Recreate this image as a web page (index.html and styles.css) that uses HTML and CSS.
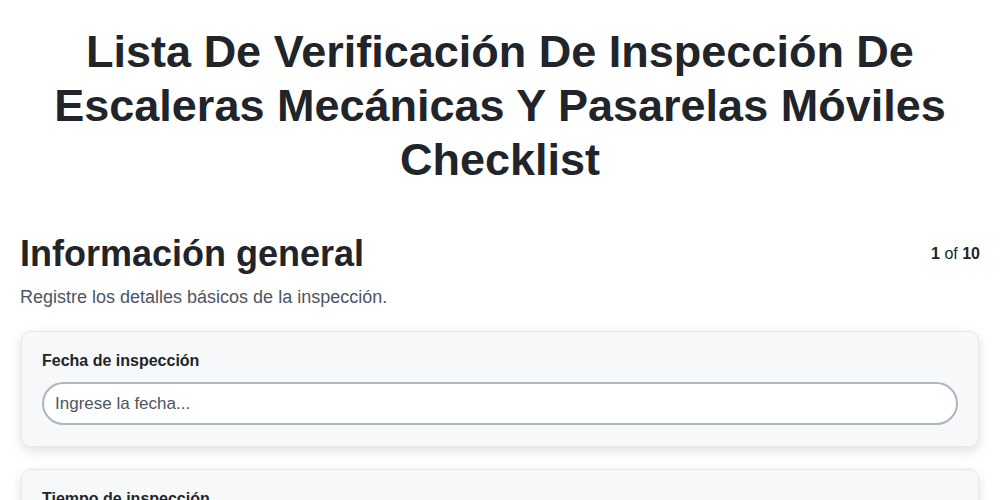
FILE: index.html
```html
<!DOCTYPE html>
<html lang="es">
<head>
    <meta charset="utf-8">
    <meta name="viewport" content="width=device-width, initial-scale=1.0">
    <title>Checklist</title>
    <link rel="stylesheet" href="styles.css">
</head>
<body>
    <div class="page">
        <h1 class="title">Lista De Verificación De Inspección De Escaleras Mecánicas Y Pasarelas Móviles Checklist</h1>

        <div class="section-head">
            <h2>Información general</h2>
            <div class="step"><b>1</b> of <b>10</b></div>
        </div>
        <p class="section-desc">Registre los detalles básicos de la inspección.</p>

        <div class="field-card">
            <label class="field-label" for="fecha">Fecha de inspección</label>
            <input class="field-input" id="fecha" type="text" placeholder="Ingrese la fecha...">
        </div>

        <div class="field-card">
            <label class="field-label" for="tiempo">Tiempo de inspección</label>
            <input class="field-input" id="tiempo" type="text" placeholder="Ingrese la hora...">
        </div>
    </div>
</body>
</html>
```

FILE: styles.css
```css
body {
    margin: 0;
    background: #fff;
    font-family: 'Liberation Sans', Arial, sans-serif;
    color: #212529;
}

.page {
    padding: 25px 20px 20px;
}

.title {
    margin: 0 0 45px;
    text-align: center;
    font-size: 45px;
    line-height: 54px;
    font-weight: bold;
}

.section-head {
    display: flex;
    justify-content: space-between;
    align-items: center;
}

.section-head h2 {
    margin: 0;
    font-size: 36px;
    line-height: 43px;
    font-weight: bold;
}

.step {
    font-size: 16px;
    color: #212529;
}

.section-desc {
    margin: 10px 0 22px;
    font-size: 18px;
    line-height: 24px;
    color: #4b5563;
}

.field-card {
    background: #f7f8fa;
    border: 1px solid #e6e8ec;
    border-radius: 10px;
    padding: 19px 20px 21px;
    margin: 0 1px 22px;
    box-shadow: 0 4px 12px rgba(0, 0, 0, 0.13);
}

.field-label {
    display: block;
    font-size: 16px;
    line-height: 20px;
    font-weight: bold;
    margin-bottom: 11px;
}

.field-input {
    display: block;
    width: 100%;
    box-sizing: border-box;
    height: 43px;
    padding: 0 11px;
    border: 2px solid #adb5bd;
    border-radius: 22px;
    background: #fff;
    font-family: 'Liberation Sans', Arial, sans-serif;
    font-size: 17px;
    color: #212529;
    outline: none;
}

.field-input::placeholder {
    color: #4b5563;
}
```
